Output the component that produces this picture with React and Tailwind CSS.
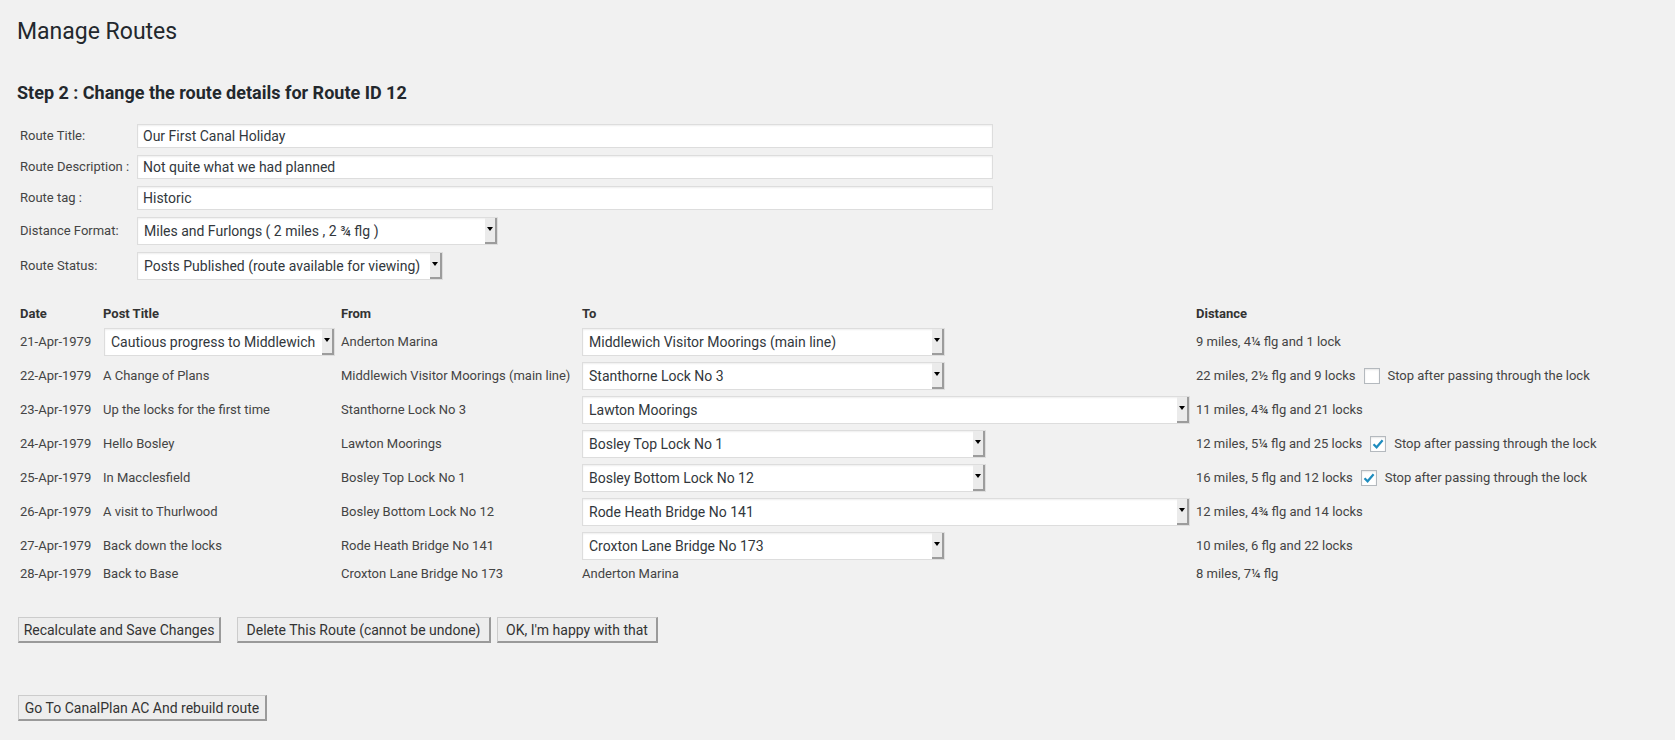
const font = { fontFamily: "Roboto, 'Liberation Sans', sans-serif" };

const routeRows = [
  { date: "21-Apr-1979", title: "Cautious progress to Middlewich", titleSelect: true, from: "Anderton Marina", to: "Middlewich Visitor Moorings (main line)", toW: "w-[363px]", dist: "9 miles, 4¼ flg and 1 lock" },
  { date: "22-Apr-1979", title: "A Change of Plans", from: "Middlewich Visitor Moorings (main line)", to: "Stanthorne Lock No 3", toW: "w-[363px]", dist: "22 miles, 2½ flg and 9 locks", stop: false },
  { date: "23-Apr-1979", title: "Up the locks for the first time", from: "Stanthorne Lock No 3", to: "Lawton Moorings", toW: "w-[608px]", dist: "11 miles, 4¾ flg and 21 locks" },
  { date: "24-Apr-1979", title: "Hello Bosley", from: "Lawton Moorings", to: "Bosley Top Lock No 1", toW: "w-[404px]", dist: "12 miles, 5¼ flg and 25 locks", stop: true },
  { date: "25-Apr-1979", title: "In Macclesfield", from: "Bosley Top Lock No 1", to: "Bosley Bottom Lock No 12", toW: "w-[404px]", dist: "16 miles, 5 flg and 12 locks", stop: true },
  { date: "26-Apr-1979", title: "A visit to Thurlwood", from: "Bosley Bottom Lock No 12", to: "Rode Heath Bridge No 141", toW: "w-[608px]", dist: "12 miles, 4¾ flg and 14 locks" },
  { date: "27-Apr-1979", title: "Back down the locks", from: "Rode Heath Bridge No 141", to: "Croxton Lane Bridge No 173", toW: "w-[363px]", dist: "10 miles, 6 flg and 22 locks" },
  { date: "28-Apr-1979", title: "Back to Base", from: "Croxton Lane Bridge No 173", to: null, toText: "Anderton Marina", dist: "8 miles, 7¼ flg" },
];

function Select({ value, className }) {
  return (
    <div className={`flex h-[28px] border border-[#dddddd] bg-white shadow-[inset_0_1px_2px_rgba(0,0,0,0.07)] ${className}`}>
      <span className="flex-1 truncate pl-[6px] text-[14px] leading-[26px] text-[#32373c]">{value}</span>
      <span className="flex w-[12px] shrink-0 items-center justify-center border-r-2 border-b-2 border-r-[#9c9c9c] border-b-[#9c9c9c] bg-[#ebebeb] pb-[2px]">
        <span className="h-0 w-0 border-x-[3px] border-t-[4px] border-x-transparent border-t-black" />
      </span>
    </div>
  );
}

function TextInput({ value }) {
  return (
    <div className="flex h-[24px] w-[856px] items-center border border-[#dddddd] bg-white pl-[5px] text-[14px] text-[#32373c] shadow-[inset_0_1px_2px_rgba(0,0,0,0.07)]">
      {value}
    </div>
  );
}

function Checkbox({ checked }) {
  return (
    <span className="ml-[8px] mr-[8px] flex h-[16px] w-[16px] items-center justify-center border border-[#b4b9be] bg-white shadow-[inset_0_1px_2px_rgba(0,0,0,0.1)]">
      {checked && (
        <svg width="14" height="14" viewBox="0 0 14 14">
          <path d="M2.5 7.2 L5.6 10.3 L11.6 3.2" fill="none" stroke="#1e8cbe" strokeWidth="2.2" />
        </svg>
      )}
    </span>
  );
}

function Button({ children, className = "" }) {
  return (
    <button className={`h-[26px] border border-[#cccccc] border-r-2 border-b-2 border-r-[#9a9a9a] border-b-[#9a9a9a] bg-[#ededed] text-center text-[14px] leading-[22px] text-[#333333] ${className}`}>
      {children}
    </button>
  );
}

function FormRow({ label, children }) {
  return (
    <div className="flex items-center">
      <span className="w-[117px] shrink-0 text-[13px] text-[#444444]">{label}</span>
      {children}
    </div>
  );
}

export default function App() {
  return (
    <div className="min-h-screen bg-[#f1f1f1] pl-[17px] pt-[17px] text-[#444444]" style={font}>
      <h2 className="text-[23px] leading-[30px] font-normal text-[#23282d]">Manage Routes</h2>
      <h3 className="mt-[34px] text-[18px] leading-[24px] font-bold text-[#23282d]">
        Step 2 : Change the route details for Route ID 12
      </h3>

      <div className="mt-[19px] flex flex-col gap-[7px] pl-[3px]">
        <FormRow label="Route Title:">
          <TextInput value="Our First Canal Holiday" />
        </FormRow>
        <FormRow label="Route Description :">
          <TextInput value="Not quite what we had planned" />
        </FormRow>
        <FormRow label="Route tag :">
          <TextInput value="Historic" />
        </FormRow>
        <FormRow label="Distance Format:">
          <Select value="Miles and Furlongs ( 2 miles , 2 ¾ flg )" className="w-[361px]" />
        </FormRow>
        <FormRow label="Route Status:">
          <Select value="Posts Published (route available for viewing)" className="w-[306px]" />
        </FormRow>
      </div>

      <div className="mt-[23px] grid grid-cols-[83px_238px_241px_614px_1fr] pl-[3px] text-[13px]">
        <div className="flex h-[22px] items-center font-bold text-[#333333]">Date</div>
        <div className="flex h-[22px] items-center font-bold text-[#333333]">Post Title</div>
        <div className="flex h-[22px] items-center font-bold text-[#333333]">From</div>
        <div className="flex h-[22px] items-center font-bold text-[#333333]">To</div>
        <div className="flex h-[22px] items-center font-bold text-[#333333]">Distance</div>

        {routeRows.map((r) => {
          const h = r.to ? "h-[34px]" : "h-[22px]";
          return [
            <div key={r.date + "d"} className={`flex ${h} items-center`}>{r.date}</div>,
            <div key={r.date + "t"} className={`flex ${h} items-center`}>
              {r.titleSelect ? <Select value={r.title} className="ml-[1px] w-[231px]" /> : r.title}
            </div>,
            <div key={r.date + "f"} className={`flex ${h} items-center whitespace-nowrap`}>{r.from}</div>,
            <div key={r.date + "o"} className={`flex ${h} items-center`}>
              {r.to ? <Select value={r.to} className={r.toW} /> : r.toText}
            </div>,
            <div key={r.date + "x"} className={`flex ${h} items-center whitespace-nowrap`}>
              {r.dist}
              {r.stop !== undefined && (
                <>
                  <Checkbox checked={r.stop} />
                  Stop after passing through the lock
                </>
              )}
            </div>,
          ];
        })}
      </div>

      <div className="ml-[1px] mt-[32px] flex">
        <Button className="w-[203px]">Recalculate and Save Changes</Button>
        <Button className="ml-[16px] w-[254px]">Delete This Route (cannot be undone)</Button>
        <Button className="ml-[6px] w-[161px]">OK, I'm happy with that</Button>
      </div>

      <div className="ml-[1px] mt-[52px] pb-[19px]">
        <Button className="w-[249px]">Go To CanalPlan AC And rebuild route</Button>
      </div>
    </div>
  );
}
